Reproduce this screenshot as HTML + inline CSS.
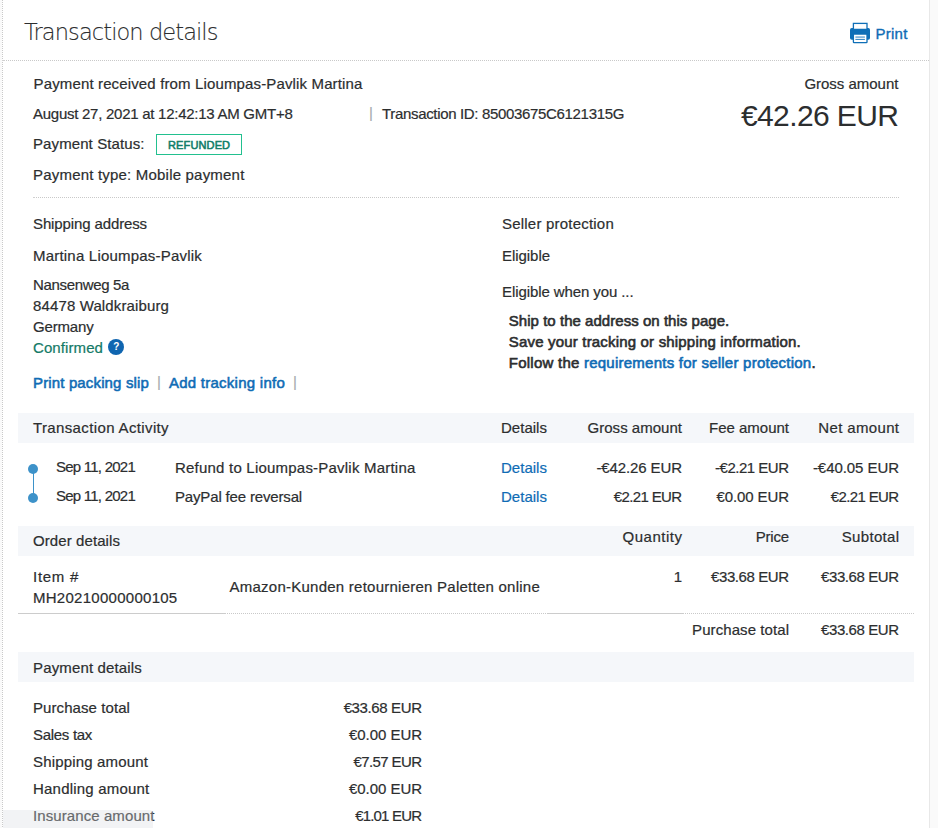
<!DOCTYPE html>
<html lang="en"><head><meta charset="utf-8"><title>Transaction details</title>
<style>
html,body{margin:0;padding:0;}
body{width:938px;height:828px;position:relative;overflow:hidden;background:#fff;font-family:"Liberation Sans",sans-serif;}
.t{position:absolute;white-space:nowrap;line-height:20px;height:20px;}
.bar{position:absolute;left:18px;width:896px;height:30px;background:#f5f7fa;}
.dot{position:absolute;height:1px;background:repeating-linear-gradient(to right,#c9c9c9 0 1px,transparent 1px 2px);}
</style></head><body>
<div style="position:absolute;left:929px;top:0;width:9px;height:828px;background:#fafafa;border-left:1px solid #e8e8e8;box-sizing:border-box"></div>
<div style="position:absolute;left:0;top:0;width:2px;height:828px;background:#fafafa"></div>
<div style="position:absolute;left:2px;top:0;width:1px;height:828px;background:repeating-linear-gradient(to bottom,#c9c9c9 0 1px,transparent 1px 2px)"></div>
<div class="dot" style="left:2px;width:927px;top:60px"></div>
<div style="position:absolute;left:2px;top:60px;width:3px;height:1px;background:#d0d0d0"></div>
<div class="dot" style="left:34px;width:865px;top:197px"></div>
<div style="position:absolute;left:33px;top:197px;width:2px;height:1px;background:#d0d0d0"></div>
<div style="position:absolute;left:156px;top:134px;width:86px;height:21px;border:1px solid #22c08f;box-sizing:border-box"></div>
<div class="bar" style="top:413px"></div>
<div class="bar" style="top:526px"></div>
<div class="bar" style="top:652px"></div>
<div class="dot" style="left:19px;width:896px;top:613px"></div>
<div style="position:absolute;left:18px;top:613px;width:208px;height:1px;background:#cccccc"></div>
<div style="position:absolute;left:548px;top:613px;width:136px;height:1px;background:#cccccc"></div>
<!-- timeline -->
<div style="position:absolute;left:32.8px;top:469px;width:1.3px;height:29px;background:#3d92c9"></div>
<div style="position:absolute;left:28px;top:464px;width:10px;height:10px;border-radius:50%;background:#3d92c9"></div>
<div style="position:absolute;left:28px;top:493px;width:10px;height:10px;border-radius:50%;background:#3d92c9"></div>
<!-- help icon -->
<div style="position:absolute;left:108px;top:338.8px;width:16.4px;height:16.2px;border-radius:50%;background:#0f65b0;color:#fff;font-size:10px;font-weight:bold;text-align:center;line-height:16.4px">?</div>
<!-- print icon -->
<svg style="position:absolute;left:850px;top:22px" width="22" height="22" viewBox="0 0 22 22">
<rect x="0" y="6" width="20" height="11.7" rx="1.8" fill="#0f6fb7"/>
<rect x="3.4" y="1.4" width="13.6" height="6" fill="#fff" stroke="#0f6fb7" stroke-width="1.3"/>
<rect x="3.4" y="12" width="13.6" height="8.6" rx="0.6" fill="#fff" stroke="#0f6fb7" stroke-width="1.3"/>
<rect x="5.4" y="14.6" width="9.5" height="0.9" fill="#0f6fb7"/><rect x="5.4" y="16.9" width="9.5" height="0.9" fill="#0f6fb7"/>
</svg>
<span class='t' id='title' style='font-size:22.5px;color:#2c2e2f;top:21.5px;left:24px;letter-spacing:-0.912px;-webkit-text-stroke:0.12px currentColor;font-weight:200;font-family:"DejaVu Sans Light","DejaVu Sans","Liberation Sans",sans-serif;'>Transaction details</span>
<span class='t' id='print' style='font-size:15px;color:#0f6cb5;top:23.5px;left:875.4px;letter-spacing:0.291px;-webkit-text-stroke:0.35px currentColor;'>Print</span>
<span class='t' id='h1' style='font-size:15px;color:#2c2e2f;top:74px;left:33.5px;letter-spacing:0.142px;-webkit-text-stroke:0.2px currentColor;'>Payment received from Lioumpas-Pavlik Martina</span>
<span class='t' id='h2' style='font-size:15px;color:#2c2e2f;top:104px;left:33px;letter-spacing:-0.262px;-webkit-text-stroke:0.2px currentColor;'>August 27, 2021 at 12:42:13 AM GMT+8</span>
<span class='t' id='h2b' style='font-size:15px;color:#a8adb0;top:103px;left:369px;-webkit-text-stroke:0.2px currentColor;'>|</span>
<span class='t' id='h2c' style='font-size:15px;color:#2c2e2f;top:104px;left:382px;letter-spacing:-0.332px;-webkit-text-stroke:0.2px currentColor;'>Transaction ID: 85003675C6121315G</span>
<span class='t' id='h3' style='font-size:15px;color:#2c2e2f;top:134px;left:33px;letter-spacing:0.096px;-webkit-text-stroke:0.2px currentColor;'>Payment Status:</span>
<span class='t' id='badge' style='font-size:11px;color:#0f7d68;top:134.5px;left:168px;letter-spacing:0.134px;-webkit-text-stroke:0.55px currentColor;'>REFUNDED</span>
<span class='t' id='h4' style='font-size:15px;color:#2c2e2f;top:165px;left:33px;letter-spacing:0.199px;-webkit-text-stroke:0.2px currentColor;'>Payment type: Mobile payment</span>
<span class='t' id='ga' style='font-size:15px;color:#2c2e2f;top:74px;right:39.62px;letter-spacing:-0.018px;-webkit-text-stroke:0.2px currentColor;'>Gross amount</span>
<span class='t' id='amt' style='font-size:30px;color:#2c2e2f;top:105.6px;right:39.59px;letter-spacing:-0.594px;'>€42.26 EUR</span>
<span class='t' id='sa' style='font-size:15px;color:#2c2e2f;top:214px;left:33px;letter-spacing:-0.120px;-webkit-text-stroke:0.2px currentColor;'>Shipping address</span>
<span class='t' id='sa1' style='font-size:15px;color:#2c2e2f;top:245.5px;left:33px;letter-spacing:0.207px;-webkit-text-stroke:0.2px currentColor;'>Martina Lioumpas-Pavlik</span>
<span class='t' id='sa2' style='font-size:15px;color:#2c2e2f;top:274.5px;left:33px;letter-spacing:-0.340px;-webkit-text-stroke:0.2px currentColor;'>Nansenweg 5a</span>
<span class='t' id='sa3' style='font-size:15px;color:#2c2e2f;top:296px;left:33px;letter-spacing:0.128px;-webkit-text-stroke:0.2px currentColor;'>84478 Waldkraiburg</span>
<span class='t' id='sa4' style='font-size:15px;color:#2c2e2f;top:317px;left:33px;letter-spacing:-0.170px;-webkit-text-stroke:0.2px currentColor;'>Germany</span>
<span class='t' id='sa5' style='font-size:15px;color:#137a66;top:337.6px;left:33px;letter-spacing:0.089px;-webkit-text-stroke:0.2px currentColor;'>Confirmed</span>
<span class='t' id='lk1' style='font-size:15px;color:#0f6cb5;top:372.5px;left:33px;letter-spacing:0.145px;-webkit-text-stroke:0.55px currentColor;'>Print packing slip</span>
<span class='t' id='lk1b' style='font-size:15px;color:#a8adb0;top:372px;left:157px;-webkit-text-stroke:0.2px currentColor;'>|</span>
<span class='t' id='lk2' style='font-size:15px;color:#0f6cb5;top:372.5px;left:169px;letter-spacing:0.251px;-webkit-text-stroke:0.55px currentColor;'>Add tracking info</span>
<span class='t' id='lk2b' style='font-size:15px;color:#a8adb0;top:372px;left:293px;-webkit-text-stroke:0.2px currentColor;'>|</span>
<span class='t' id='sp' style='font-size:15px;color:#2c2e2f;top:214px;left:502px;letter-spacing:0.211px;-webkit-text-stroke:0.2px currentColor;'>Seller protection</span>
<span class='t' id='sp1' style='font-size:15px;color:#2c2e2f;top:245.5px;left:502px;letter-spacing:-0.047px;-webkit-text-stroke:0.2px currentColor;'>Eligible</span>
<span class='t' id='sp2' style='font-size:15px;color:#2c2e2f;top:282px;left:502px;letter-spacing:-0.092px;-webkit-text-stroke:0.2px currentColor;'>Eligible when you ...</span>
<span class='t' id='sp3' style='font-size:15px;color:#2c2e2f;top:310.7px;left:508.8px;letter-spacing:0.036px;-webkit-text-stroke:0.6px currentColor;'>Ship to the address on this page.</span>
<span class='t' id='sp4' style='font-size:15px;color:#2c2e2f;top:331.7px;left:508.8px;letter-spacing:0.179px;-webkit-text-stroke:0.6px currentColor;'>Save your tracking or shipping information.</span>
<span class='t' id='sp5' style='font-size:15px;color:#2c2e2f;top:352.5px;left:508.8px;letter-spacing:0.239px;-webkit-text-stroke:0.6px currentColor;'>Follow the <span style="color:#0f6cb5">requirements for seller protection</span>.</span>
<span class='t' id='ta' style='font-size:15px;color:#2c2e2f;top:417.5px;left:33px;letter-spacing:0.366px;-webkit-text-stroke:0.2px currentColor;'>Transaction Activity</span>
<span class='t' id='ta1' style='font-size:15px;color:#2c2e2f;top:417.5px;left:501px;letter-spacing:0.020px;-webkit-text-stroke:0.2px currentColor;'>Details</span>
<span class='t' id='ta2' style='font-size:15px;color:#2c2e2f;top:417.5px;right:255.98px;letter-spacing:0.023px;-webkit-text-stroke:0.2px currentColor;'>Gross amount</span>
<span class='t' id='ta3' style='font-size:15px;color:#2c2e2f;top:417.5px;right:149.00px;letter-spacing:-0.005px;-webkit-text-stroke:0.2px currentColor;'>Fee amount</span>
<span class='t' id='ta4' style='font-size:15px;color:#2c2e2f;top:417.5px;right:38.65px;letter-spacing:0.345px;-webkit-text-stroke:0.2px currentColor;'>Net amount</span>
<span class='t' id='r1a' style='font-size:15px;color:#2c2e2f;top:456.5px;left:56px;letter-spacing:-0.762px;-webkit-text-stroke:0.2px currentColor;'>Sep 11, 2021</span>
<span class='t' id='r1b' style='font-size:15px;color:#2c2e2f;top:457.5px;left:175px;letter-spacing:0.214px;-webkit-text-stroke:0.2px currentColor;'>Refund to Lioumpas-Pavlik Martina</span>
<span class='t' id='r1c' style='font-size:15px;color:#0f6cb5;top:457.5px;left:501px;letter-spacing:0.020px;-webkit-text-stroke:0.2px currentColor;'>Details</span>
<span class='t' id='r1d' style='font-size:15px;color:#2c2e2f;top:457.5px;right:256.11px;letter-spacing:-0.111px;-webkit-text-stroke:0.2px currentColor;'>-€42.26 EUR</span>
<span class='t' id='r1e' style='font-size:15px;color:#2c2e2f;top:457.5px;right:149.49px;letter-spacing:-0.487px;-webkit-text-stroke:0.2px currentColor;'>-€2.21 EUR</span>
<span class='t' id='r1f' style='font-size:15px;color:#2c2e2f;top:457.5px;right:39.07px;letter-spacing:-0.065px;-webkit-text-stroke:0.2px currentColor;'>-€40.05 EUR</span>
<span class='t' id='r2a' style='font-size:15px;color:#2c2e2f;top:485.7px;left:56px;letter-spacing:-0.762px;-webkit-text-stroke:0.2px currentColor;'>Sep 11, 2021</span>
<span class='t' id='r2b' style='font-size:15px;color:#2c2e2f;top:486.5px;left:175px;letter-spacing:-0.162px;-webkit-text-stroke:0.2px currentColor;'>PayPal fee reversal</span>
<span class='t' id='r2c' style='font-size:15px;color:#0f6cb5;top:486.5px;left:501px;letter-spacing:0.020px;-webkit-text-stroke:0.2px currentColor;'>Details</span>
<span class='t' id='r2d' style='font-size:15px;color:#2c2e2f;top:486.5px;right:256.65px;letter-spacing:-0.653px;-webkit-text-stroke:0.2px currentColor;'>€2.21 EUR</span>
<span class='t' id='r2e' style='font-size:15px;color:#2c2e2f;top:486.5px;right:149.10px;letter-spacing:-0.097px;-webkit-text-stroke:0.2px currentColor;'>€0.00 EUR</span>
<span class='t' id='r2f' style='font-size:15px;color:#2c2e2f;top:486.5px;right:39.65px;letter-spacing:-0.653px;-webkit-text-stroke:0.2px currentColor;'>€2.21 EUR</span>
<span class='t' id='od' style='font-size:15px;color:#2c2e2f;top:530.5px;left:33px;letter-spacing:0.087px;-webkit-text-stroke:0.2px currentColor;'>Order details</span>
<span class='t' id='od1' style='font-size:15px;color:#2c2e2f;top:527px;right:255.48px;letter-spacing:0.516px;-webkit-text-stroke:0.2px currentColor;'>Quantity</span>
<span class='t' id='od2' style='font-size:15px;color:#2c2e2f;top:527px;right:149.24px;letter-spacing:-0.237px;-webkit-text-stroke:0.2px currentColor;'>Price</span>
<span class='t' id='od3' style='font-size:15px;color:#2c2e2f;top:527px;right:38.69px;letter-spacing:0.307px;-webkit-text-stroke:0.2px currentColor;'>Subtotal</span>
<span class='t' id='it1' style='font-size:15px;color:#2c2e2f;top:567px;left:33px;letter-spacing:0.719px;-webkit-text-stroke:0.2px currentColor;'>Item #</span>
<span class='t' id='it2' style='font-size:15px;color:#2c2e2f;top:588px;left:33px;letter-spacing:0.273px;-webkit-text-stroke:0.2px currentColor;'>MH20210000000105</span>
<span class='t' id='it3' style='font-size:15px;color:#2c2e2f;top:577px;left:229.5px;letter-spacing:0.245px;-webkit-text-stroke:0.2px currentColor;'>Amazon-Kunden retournieren Paletten online</span>
<span class='t' id='it4' style='font-size:15px;color:#2c2e2f;top:567px;right:256.00px;-webkit-text-stroke:0.2px currentColor;'>1</span>
<span class='t' id='it5' style='font-size:15px;color:#2c2e2f;top:567px;right:149.42px;letter-spacing:-0.422px;-webkit-text-stroke:0.2px currentColor;'>€33.68 EUR</span>
<span class='t' id='it6' style='font-size:15px;color:#2c2e2f;top:567px;right:39.42px;letter-spacing:-0.422px;-webkit-text-stroke:0.2px currentColor;'>€33.68 EUR</span>
<span class='t' id='pt1' style='font-size:15px;color:#2c2e2f;top:620px;right:148.92px;letter-spacing:0.079px;-webkit-text-stroke:0.2px currentColor;'>Purchase total</span>
<span class='t' id='pt2' style='font-size:15px;color:#2c2e2f;top:620px;right:39.42px;letter-spacing:-0.422px;-webkit-text-stroke:0.2px currentColor;'>€33.68 EUR</span>
<span class='t' id='pd' style='font-size:15px;color:#2c2e2f;top:657.5px;left:33px;letter-spacing:0.151px;-webkit-text-stroke:0.2px currentColor;'>Payment details</span>
<span class='t' id='p0a' style='font-size:15px;color:#2c2e2f;top:697.5px;left:33px;letter-spacing:0.079px;-webkit-text-stroke:0.2px currentColor;'>Purchase total</span>
<span class='t' id='p0b' style='font-size:15px;color:#2c2e2f;top:697.5px;right:516.37px;letter-spacing:-0.372px;-webkit-text-stroke:0.2px currentColor;'>€33.68 EUR</span>
<span class='t' id='p1a' style='font-size:15px;color:#2c2e2f;top:724.5px;left:33px;letter-spacing:-0.300px;-webkit-text-stroke:0.2px currentColor;'>Sales tax</span>
<span class='t' id='p1b' style='font-size:15px;color:#2c2e2f;top:724.5px;right:516.04px;letter-spacing:-0.042px;-webkit-text-stroke:0.2px currentColor;'>€0.00 EUR</span>
<span class='t' id='p2a' style='font-size:15px;color:#2c2e2f;top:751.5px;left:33px;letter-spacing:0.160px;-webkit-text-stroke:0.2px currentColor;'>Shipping amount</span>
<span class='t' id='p2b' style='font-size:15px;color:#2c2e2f;top:751.5px;right:516.60px;letter-spacing:-0.597px;-webkit-text-stroke:0.2px currentColor;'>€7.57 EUR</span>
<span class='t' id='p3a' style='font-size:15px;color:#2c2e2f;top:778.5px;left:33px;letter-spacing:0.205px;-webkit-text-stroke:0.2px currentColor;'>Handling amount</span>
<span class='t' id='p3b' style='font-size:15px;color:#2c2e2f;top:778.5px;right:516.04px;letter-spacing:-0.042px;-webkit-text-stroke:0.2px currentColor;'>€0.00 EUR</span>
<span class='t' id='p4a' style='font-size:15px;color:#2c2e2f;top:805.5px;left:33px;letter-spacing:0.089px;-webkit-text-stroke:0.2px currentColor;'>Insurance amount</span>
<span class='t' id='p4b' style='font-size:15px;color:#2c2e2f;top:805.5px;right:516.82px;letter-spacing:-0.819px;-webkit-text-stroke:0.2px currentColor;'>€1.01 EUR</span>

<div style="position:absolute;left:3px;top:810px;width:150px;height:18px;background:rgba(218,221,226,0.34);border-top-right-radius:4px"></div>
</body></html>
